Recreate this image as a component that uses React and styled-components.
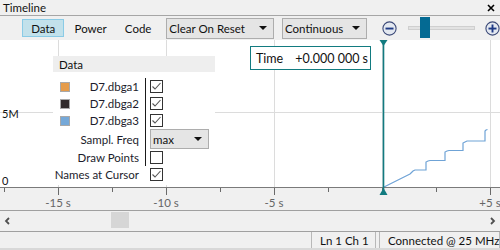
import React from "react";
import styled, { createGlobalStyle } from "styled-components";

const GlobalStyle = createGlobalStyle`
  html, body { margin: 0; padding: 0; background: #f0f0f0; }
  body { font-family: Lato, "Liberation Sans", sans-serif; font-size: 11px; color: #111; }
  * { box-sizing: border-box; }
`;

const TEAL = "#127b80";

const Window = styled.div`
  width: 500px;
  height: 250px;
  display: flex;
  flex-direction: column;
  background: #f0f0f0;
  overflow: hidden;
`;

const TitleBar = styled.div`
  height: 16px;
  display: flex;
  align-items: center;
  justify-content: space-between;
  padding: 0 5px 0 3px;
  border-bottom: 1px solid #a6a6a6;
  line-height: 14px;
  font-size: 11.5px;
`;

const Toolbar = styled.div`
  height: 24px;
  display: flex;
  align-items: center;
  padding-left: 22px;
  gap: 5px;
  font-size: 11.5px;
`;

const ToolButton = styled.div`
  width: 43px;
  height: 18px;
  display: flex;
  align-items: center;
  justify-content: center;
  border: 1px solid ${({ active }) => (active ? "#8acbe6" : "transparent")};
  background: ${({ active }) => (active ? "#c2e1eb" : "transparent")};
`;

const Combo = styled.div`
  width: ${({ w }) => w}px;
  height: ${({ h }) => h || 21}px;
  margin-left: ${({ ml }) => ml || 0}px;
  display: flex;
  align-items: center;
  justify-content: space-between;
  padding: 0 6px 0 2px;
  background: #e5e5e5;
  border: 1px solid #adadad;
  white-space: nowrap;
`;

const Arrow = styled.span`
  width: 0;
  height: 0;
  border-left: 4px solid transparent;
  border-right: 4px solid transparent;
  border-top: 4px solid #111;
`;

const Zoom = styled.div`
  display: flex;
  align-items: center;
  margin-left: 10px;
`;

const Track = styled.div`
  position: relative;
  width: 67px;
  height: 4px;
  margin: 0 10px 0 11px;
  background: #e2e2e2;
  border: 1px solid #cfcfcf;
`;

const Thumb = styled.div`
  position: absolute;
  top: -10px;
  width: 10px;
  height: 21px;
  background: #046a93;
`;

const ChartArea = styled.div`
  position: relative;
  display: flex;
  flex-direction: column;
`;

const Plot = styled.div`
  height: 147px;
  background: #fff;
  position: relative;
`;

const Axis = styled.div`
  position: relative;
  height: 23px;
  border-top: 1px solid #7a7a7a;
`;

const TickLabel = styled.span`
  position: absolute;
  top: 8px;
  transform: translateX(-50%);
  color: #666;
  white-space: nowrap;
  font-size: 11.5px;
`;

const YLabel = styled.span`
  position: absolute;
  left: 2px;
  color: #111;
`;

const Legend = styled.div`
  position: absolute;
  left: 53px;
  top: 16px;
  width: 162px;
  background: #fff;
  padding-bottom: 2px;
  font-size: 11.5px;
`;

const LegendHead = styled.div`
  height: 16px;
  background: #eeeeee;
  padding-left: 6px;
  display: flex;
  align-items: center;
  margin-bottom: 6px;
`;

const Row = styled.div`
  height: ${({ h }) => h || 17}px;
  display: flex;
  align-items: center;
`;

const SwatchCell = styled.div`
  width: 20px;
  padding-left: 7px;
  display: flex;
`;

const Swatch = styled.span`
  width: 10px;
  height: 10px;
  background: ${({ color }) => color};
  border: 1px solid #a8a8a8;
`;

const Label = styled.div`
  width: 66px;
  display: flex;
  justify-content: flex-end;
  white-space: nowrap;
  color: #1c1c2c;
`;

const Ctrl = styled.div`
  align-self: stretch;
  display: flex;
  align-items: center;
  margin-left: 6px;
  padding-left: 4px;
  border-left: 1px solid ${({ sep }) => (sep ? "#1a1a1a" : "transparent")};
`;

const Box = styled.span`
  width: 13px;
  height: 13px;
  border: 1px solid #333;
  background: #fff;
  display: flex;
  align-items: center;
  justify-content: center;
`;

const TimeBox = styled.div`
  position: absolute;
  left: 250px;
  top: 6px;
  width: 121px;
  height: 24px;
  border: 1.5px solid ${TEAL};
  background: #fff;
  display: flex;
  align-items: center;
  gap: 12px;
  padding-left: 5px;
  font-size: 12.5px;
  white-space: nowrap;
`;

const Cursor = styled.svg`
  position: absolute;
  left: 379px;
  top: 0;
`;

const ScrollBar = styled.div`
  height: 21px;
  border-top: 1px solid #a0a0a0;
  display: flex;
  align-items: center;
  padding: 0 4px;
`;

const ScrollTrack = styled.div`
  position: relative;
  flex: 1;
  height: 100%;
`;

const ScrollThumb = styled.div`
  position: absolute;
  top: 1px;
  width: 18px;
  height: 16px;
  background: #d6d6d6;
`;

const StatusBar = styled.div`
  height: 19px;
  border-top: 1px solid #a0a0a0;
  border-bottom: 2px solid #d8d8d8;
  display: flex;
  justify-content: flex-end;
  gap: 3px;
  font-size: 11.5px;
`;

const Panel = styled.div`
  width: ${({ w }) => w}px;
  border-left: 1px solid #b8b8b8;
  border-right: 1px solid #b8b8b8;
  display: flex;
  align-items: center;
  padding-left: ${({ pl }) => pl || 8}px;
  white-space: nowrap;
`;

const Check = ({ on }) => (
  <Box>
    {on && (
      <svg width="11" height="11" viewBox="0 0 11 11">
        <polyline points="1.5,5.5 4,8 9.5,2" fill="none" stroke="#555" strokeWidth="1.1" />
      </svg>
    )}
  </Box>
);

const ZoomIcon = ({ plus }) => (
  <svg width="15" height="15" viewBox="0 0 15 15">
    <circle cx="7.5" cy="7.5" r="6.6" fill="#e3e8f0" stroke="#3c4a78" strokeWidth="1.1" />
    <rect x="3.5" y="6.6" width="8" height="1.9" fill="#1f3a86" />
    {plus && <rect x="6.55" y="3.5" width="1.9" height="8" fill="#1f3a86" />}
  </svg>
);

const Chevron = ({ right }) => (
  <svg width="7" height="8" viewBox="0 0 7 8">
    <polyline
      points={right ? "2,1 5,4 2,7" : "5,1 2,4 5,7"}
      fill="none"
      stroke="#505050"
      strokeWidth="1.8"
    />
  </svg>
);

const signal = [
  [384, 187], [386, 186], [388, 185], [390, 184], [392, 183], [394, 182], [396, 181],
  [398, 180], [400, 179], [402, 178], [404, 177], [406, 176], [408, 175], [410, 174],
  [411, 173], [413, 171], [415, 170], [426, 170], [426, 162], [428, 161], [430, 160.5],
  [445, 160.5], [445, 152], [447, 151], [449, 150.5], [463, 150.5], [463, 143], [465, 142],
  [467, 141], [485, 141], [485, 131], [486, 130], [487.5, 129.5],
];

const major = [
  { x: 58, t: "-15 s" },
  { x: 166, t: "-10 s" },
  { x: 274, t: "-5 s" },
  { x: 382, t: "" },
  { x: 490, t: "+5 s" },
];
const minor = [4, 112, 220, 328, 436];

const rows = [
  { name: "D7.dbga1", color: "#e59c4b", on: true },
  { name: "D7.dbga2", color: "#302a2b", on: true },
  { name: "D7.dbga3", color: "#75a8d8", on: true },
];

export default function App() {
  const plotTop = 40;
  return (
    <Window>
      <GlobalStyle />
      <TitleBar>
        <span>Timeline</span>
        <svg width="8" height="8" viewBox="0 0 8 8">
          <path d="M1 1 L7 7 M7 1 L1 7" stroke="#000" strokeWidth="1.6" />
        </svg>
      </TitleBar>

      <Toolbar>
        <ToolButton active>Data</ToolButton>
        <ToolButton>Power</ToolButton>
        <ToolButton>Code</ToolButton>
        <Combo w={109} ml={2}>
          Clear On Reset <Arrow />
        </Combo>
        <Combo w={86} ml={3}>
          Continuous <Arrow />
        </Combo>
        <Zoom>
          <ZoomIcon />
          <Track>
            <Thumb style={{ left: 11 }} />
          </Track>
          <ZoomIcon plus />
        </Zoom>
      </Toolbar>

      <ChartArea>
        <Plot>
          <svg width="500" height="147" style={{ display: "block" }}>
            {major.map((m) => (
              <line key={m.x} x1={m.x + 0.5} x2={m.x + 0.5} y1="0" y2="147" stroke="#dcdcdc" />
            ))}
            <line x1="0" x2="500" y1="72.5" y2="72.5" stroke="#dcdcdc" />
            <polyline
              points={signal.map(([x, y]) => `${x},${y - plotTop}`).join(" ")}
              fill="none"
              stroke="#6fa3d6"
              strokeWidth="1.2"
            />
          </svg>
          <YLabel style={{ top: 67 }}>5M</YLabel>
          <YLabel style={{ top: 134 }}>0</YLabel>

          <Legend>
            <LegendHead>Data</LegendHead>
            {rows.map((r) => (
              <Row key={r.name}>
                <SwatchCell>
                  <Swatch color={r.color} />
                </SwatchCell>
                <Label>{r.name}</Label>
                <Ctrl sep>
                  <Check on={r.on} />
                </Ctrl>
              </Row>
            ))}
            <Row h={20}>
              <SwatchCell />
              <Label>Sampl. Freq</Label>
              <Ctrl sep>
                <Combo w={59} h={20}>
                  max <Arrow />
                </Combo>
              </Ctrl>
            </Row>
            <Row>
              <SwatchCell />
              <Label>Draw Points</Label>
              <Ctrl sep>
                <Check />
              </Ctrl>
            </Row>
            <Row>
              <SwatchCell />
              <Label>Names at Cursor</Label>
              <Ctrl>
                <Check on />
              </Ctrl>
            </Row>
          </Legend>

          <TimeBox>
            <span>Time</span>
            <span>+0.000 000 s</span>
          </TimeBox>
        </Plot>

        <Axis>
          <svg width="500" height="10" style={{ display: "block" }}>
            {major.map((m) => (
              <line key={m.x} x1={m.x + 0.5} x2={m.x + 0.5} y1="0" y2="7" stroke="#6a6a6a" />
            ))}
            {minor.map((x) => (
              <line key={x} x1={x + 0.5} x2={x + 0.5} y1="0" y2="4" stroke="#6a6a6a" />
            ))}
          </svg>
          {major.map((m) => (
            <TickLabel key={m.x} style={{ left: m.x }}>
              {m.t}
            </TickLabel>
          ))}
        </Axis>

        <Cursor width="9" height="156" viewBox="0 0 9 156">
          <line x1="4.5" x2="4.5" y1="0" y2="150" stroke={TEAL} strokeWidth="1.6" />
          <polygon points="0.5,0 8.5,0 4.5,6" fill={TEAL} />
          <polygon points="0.5,155 8.5,155 4.5,148" fill={TEAL} />
        </Cursor>
      </ChartArea>

      <ScrollBar>
        <Chevron />
        <ScrollTrack>
          <ScrollThumb style={{ left: 100 }} />
        </ScrollTrack>
        <Chevron right />
      </ScrollBar>

      <StatusBar>
        <Panel w={65}>Ln 1 Ch 1</Panel>
        <Panel w={121}>Connected @ 25 MHz</Panel>
      </StatusBar>
    </Window>
  );
}
